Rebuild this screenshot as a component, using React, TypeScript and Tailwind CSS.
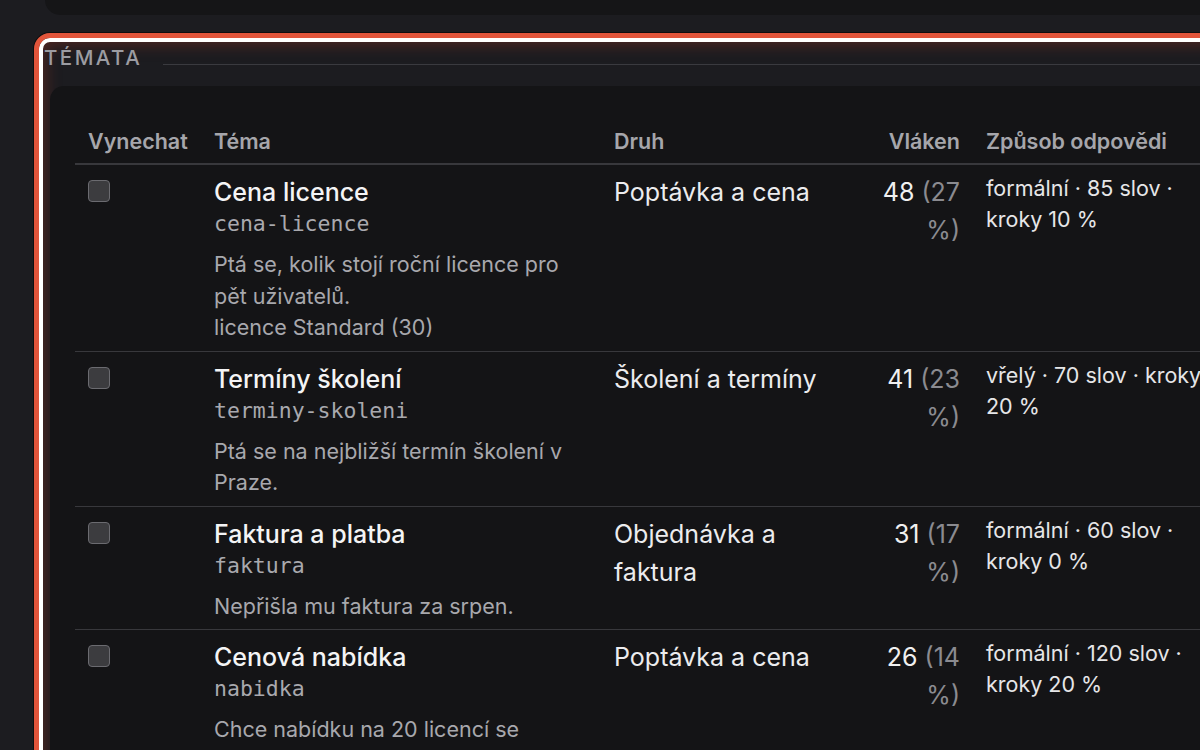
type Topic = {
  title: string
  slug: string
  desc: string[]
  kind: string
  threads: number
  share: number
  mode: string
}

const topics: Topic[] = [
  {
    title: 'Cena licence',
    slug: 'cena-licence',
    desc: ['Ptá se, kolik stojí roční licence pro pět uživatelů.', 'licence Standard (30)'],
    kind: 'Poptávka a cena',
    threads: 48,
    share: 27,
    mode: 'formální · 85 slov · kroky 10 %',
  },
  {
    title: 'Termíny školení',
    slug: 'terminy-skoleni',
    desc: ['Ptá se na nejbližší termín školení v Praze.'],
    kind: 'Školení a termíny',
    threads: 41,
    share: 23,
    mode: 'vřelý · 70 slov · kroky 20 %',
  },
  {
    title: 'Faktura a platba',
    slug: 'faktura',
    desc: ['Nepřišla mu faktura za srpen.'],
    kind: 'Objednávka a faktura',
    threads: 31,
    share: 17,
    mode: 'formální · 60 slov · kroky 0 %',
  },
  {
    title: 'Cenová nabídka',
    slug: 'nabidka',
    desc: ['Chce nabídku na 20 licencí se slevou pro školy.'],
    kind: 'Poptávka a cena',
    threads: 26,
    share: 14,
    mode: 'formální · 120 slov · kroky 20 %',
  },
]

const cols = 'grid grid-cols-[126px_400px_256px_116px_262px]'

function TopicRow({ t }: { t: Topic }) {
  return (
    <div className={`${cols} border-b border-[#38383c] pt-2 pb-[7px]`}>
      <div className="px-[13px]">
        <div className="mt-[7px] h-[22px] w-[22px] rounded-[4px] border-[1.5px] border-[#6b6b70] bg-[#3c3c3f]" />
      </div>
      <div className="px-[13px]">
        <div className="text-[25px] font-medium leading-[38px] text-[#f4f4f5]">{t.title}</div>
        <div className="font-['DejaVu_Sans_Mono',monospace] text-[21.5px] leading-[26px] text-[#a9a9ae]">{t.slug}</div>
        <div className="mt-3 text-[21.5px] leading-[31.5px] text-[#a8a8ad]">
          {t.desc.map((d) => (
            <div key={d}>{d}</div>
          ))}
        </div>
      </div>
      <div className="px-[13px] text-[25px] leading-[38px] text-[#ececee]">{t.kind}</div>
      <div className="px-[13px] text-right text-[25px] leading-[38px] text-[#f0f0f0]">
        {t.threads} <span className="text-[#8b8b90]">({t.share} %)</span>
      </div>
      <div className="px-[13px] text-[21.5px] leading-[31px] text-[#e6e6e8]">{t.mode}</div>
    </div>
  )
}

export default function App() {
  return (
    <div className="h-[750px] w-[1200px] overflow-hidden bg-[#1c1c20] font-['Inter',sans-serif]">
      <div className="ml-[45px] h-[15px] w-[1300px] rounded-bl-[16px] bg-[#151517]" />

      <section className="ml-[34px] mt-[18px] w-[1280px] rounded-[16px] border-[5px] border-[#e2553b] shadow-[0_0_0_1px_rgba(0,0,0,0.5),inset_0_0_0_4px_#ffffff,inset_0_0_16px_6px_rgba(190,60,40,0.35)]">
        <div className="flex items-start pl-[5px] pt-[5px]">
          <h2 className="text-[20.5px] font-medium uppercase leading-[30px] tracking-[0.12em] text-[#9c9ca2]">Témata</h2>
          <div className="ml-[21px] mt-[21px] h-px flex-1 bg-[#3a3a3f]" />
        </div>

        <div className="ml-[11px] mt-[13px] rounded-[14px] bg-[#141416] pl-[25px] pt-6 pb-6">
          <div className={`${cols} border-b-2 border-[#38383c] pt-3 pb-[3px] text-[21.5px] font-semibold leading-[38px] text-[#a6a6ab]`}>
            <div className="px-[13px]">Vynechat</div>
            <div className="px-[13px]">Téma</div>
            <div className="px-[13px]">Druh</div>
            <div className="px-[13px] text-right">Vláken</div>
            <div className="px-[13px]">Způsob odpovědi</div>
          </div>
          {topics.map((t) => (
            <TopicRow key={t.slug} t={t} />
          ))}
        </div>
      </section>
    </div>
  )
}
